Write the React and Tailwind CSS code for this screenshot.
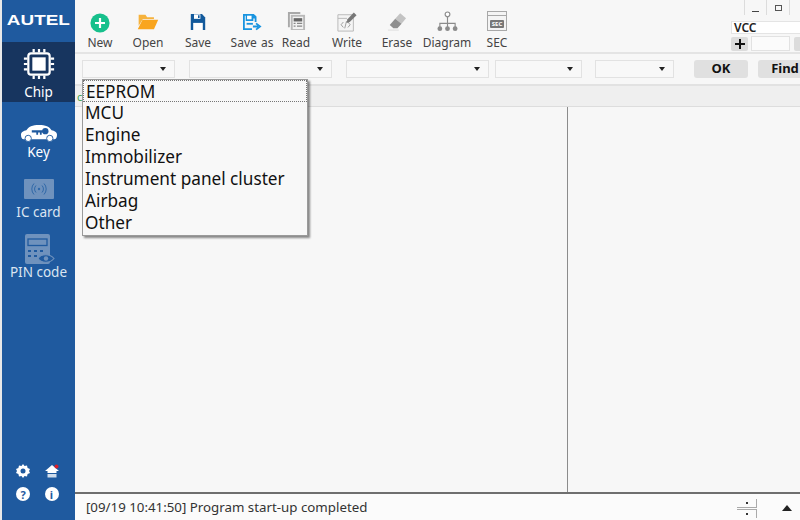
import React from "react";

const font = "font-['Noto_Sans','Open_Sans',sans-serif]";

const NewIcon = () => (
  <svg width="20" height="20" viewBox="0 0 22 22">
    <circle cx="11" cy="11" r="10.500" fill="#17c08c" />
    <path d="M11 5.500v11M5.500 11h11" stroke="#fff" strokeWidth="2.400" />
  </svg>
);

const OpenIcon = () => (
  <svg className="mb-[3px]" width="22" height="17" viewBox="0 0 24 20">
    <path d="M1 2h8l2 3h8v2H6L1 15z" fill="#f6b23c" />
    <path d="M5.500 8H24l-5 11H0z" fill="#f9a51e" />
  </svg>
);

const SaveIcon = () => (
  <svg className="mb-[2px]" width="16" height="18" viewBox="0 0 20 20" preserveAspectRatio="none">
    <path d="M1 1h14l4 4v14H1z" fill="#135a9c" />
    <path d="M5 1.500h8v5H5z" fill="#fff" />
    <path d="M10 2.500h2v3h-2z" fill="#135a9c" />
    <path d="M4 11h12v8H4z" fill="#fff" />
  </svg>
);

const SaveAsIcon = () => (
  <svg className="mb-[2px]" width="20" height="18" viewBox="0 0 22 20">
    <path d="M1 1h12l3 3v6h-2V6h-1.500v3H4V3H3v14h8v2H1z" fill="#1994e0" />
    <path d="M5.500 3h5v4h-5z" fill="#fff" />
    <path d="M12 15h6M15.500 11.500 20 15l-4.500 3.500" stroke="#1994e0" strokeWidth="2" fill="none" />
    <path d="M5 12h7" stroke="#1994e0" strokeWidth="2" />
  </svg>
);

const ReadIcon = () => (
  <svg className="mb-[2px]" width="19" height="20" viewBox="0 0 20 21">
    <path d="M1 1h13v2H3v14H1z" fill="#a9a9a9" />
    <path d="M4 4h15v16H4z" fill="#b9b9b9" />
    <path d="M6 6h11v13H6z" fill="#f2f2f2" />
    <path d="M7 7.500h9v3.500H7z" fill="#666" />
    <path d="M7 13h2M10.500 13H16M7 16h2M10.500 16H16" stroke="#888" strokeWidth="1.300" />
  </svg>
);

const WriteIcon = () => (
  <svg className="mb-[1px]" width="20" height="20" viewBox="0 0 22 22">
    <path d="M1 3h17v18H1z" fill="#f4f4f4" stroke="#b5b5b5" />
    <path d="M1 7h10" stroke="#b5b5b5" />
    <path d="M7 11l-2.500 3L7 17M12 11l2.500 3L12 17M10.500 10l-2 8" stroke="#999" strokeWidth="1" fill="none" />
    <path d="M18.500 0.500l3 3-7.500 7.500-3.500 1 1-4z" fill="#777" />
  </svg>
);

const EraseIcon = () => (
  <svg className="mb-[2px]" width="20" height="19" viewBox="0 0 22 21">
    <path d="M14.500 1.500 21 7l-5 6-7-5.500z" fill="#c3c3c3" />
    <path d="M9 7.500l7 5.500-4.500 5H7l-4-3.500z" fill="#8f8f8f" />
    <path d="M1 20h12" stroke="#ddd" strokeWidth="1" />
  </svg>
);

const DiagramIcon = () => (
  <svg className="mb-[1px]" width="21" height="21" viewBox="0 0 22 22">
    <circle cx="11" cy="3.500" r="2.500" fill="#fff" stroke="#8b8b8b" strokeWidth="1.200" />
    <path d="M11 6v12M3 18v-5h16v5" stroke="#8b8b8b" strokeWidth="1.200" fill="none" />
    <circle cx="3" cy="18.500" r="2.500" fill="#8b8b8b" />
    <circle cx="11" cy="18.500" r="2.500" fill="#8b8b8b" />
    <circle cx="19" cy="18.500" r="2.500" fill="#8b8b8b" />
  </svg>
);

const SecIcon = () => (
  <div className="mb-[2px] flex h-5 w-5 flex-col border border-[#a8a8a8] bg-[#f4f4f4]">
    <div className="h-1 border-b border-[#a8a8a8]" />
    <div className="m-[2px] mt-1 flex h-[9px] items-center justify-center rounded-[1px] bg-[#777] text-[6px] font-bold leading-none text-white">
      SEC
    </div>
  </div>
);

const tools = [
  { label: "New", width: "w-[48px]", icon: <NewIcon /> },
  { label: "Open", width: "w-[48px]", icon: <OpenIcon /> },
  { label: "Save", width: "w-[52px]", icon: <SaveIcon /> },
  { label: "Save as", width: "w-[56px]", icon: <SaveAsIcon /> },
  { label: "Read", width: "w-[32px]", icon: <ReadIcon /> },
  { label: "Write", width: "w-[70px]", icon: <WriteIcon /> },
  { label: "Erase", width: "w-[30px]", icon: <EraseIcon /> },
  { label: "Diagram", width: "w-[70px]", icon: <DiagramIcon /> },
  { label: "SEC", width: "w-[30px]", icon: <SecIcon /> },
];

const ToolButton = ({ label, width, icon }) => (
  <div className={`flex shrink-0 flex-col items-center ${width}`}>
    <div className="flex h-[22px] items-end">{icon}</div>
    <span className="mt-[1px] whitespace-nowrap text-xs leading-[17px] text-[#444] [word-spacing:1px]">{label}</span>
  </div>
);

const ChipIcon = () => (
  <svg className="mb-[2px]" width="32" height="32" viewBox="0 0 36 36">
    <rect x="6" y="6" width="24" height="24" rx="3" fill="none" stroke="#fff" strokeWidth="2.500" />
    <rect x="10.500" y="10.500" width="15" height="15" fill="#fff" />
    <path d="M12 1v4M18 1v4M24 1v4M12 31v4M18 31v4M24 31v4M1 12h4M1 18h4M1 24h4M31 12h4M31 18h4M31 24h4" stroke="#fff" strokeWidth="2.500" />
  </svg>
);

const KeyIcon = () => (
  <svg width="42" height="18" viewBox="0 0 42 20">
    <path d="M1 12c0-3 3-4.500 6-5 2-4 7-6 14-6s12 2 14 6c3 .5 6 2 6 5 0 3-1 5-3 5H4c-2 0-3-2-3-5z" fill="#fff" />
    <circle cx="9" cy="16" r="3.500" fill="#fff" stroke="#1f5a9f" strokeWidth="1" />
    <circle cx="33" cy="16" r="3.500" fill="#fff" stroke="#1f5a9f" strokeWidth="1" />
    <circle cx="28" cy="8" r="3.500" fill="#1f5a9f" />
    <path d="M13 7h14v2.500h-3v2.500h-2V9.500h-2v2.500h-2V9.500h-5z" fill="#1f5a9f" />
  </svg>
);

const CardIcon = () => (
  <svg className="mb-[3px]" width="30" height="20" viewBox="0 0 30 20">
    <rect width="30" height="20" rx="1" fill="#6f92bd" />
    <circle cx="15" cy="10" r="1.200" fill="#2f68a8" />
    <path d="M12 6.500a5 5 0 0 0 0 7M18 6.500a5 5 0 0 1 0 7M10 4.500a8 8 0 0 0 0 11M20 4.500a8 8 0 0 1 0 11" stroke="#2f68a8" fill="none" />
  </svg>
);

const PinIcon = () => (
  <svg className="mb-[-3px] ml-[3px]" width="30" height="31" viewBox="0 0 30 31">
    <rect width="25" height="30" rx="2" fill="#6f92bd" />
    <rect x="3" y="5" width="19" height="6.500" fill="none" stroke="#1f5a9f" strokeWidth="1.300" />
    <path d="M3 17h3M9 17h3M15 17h3M3 22h3M9 22h3" stroke="#1f5a9f" strokeWidth="2" />
    <path d="M13 24.500c3-5 12-5 16 0-4 5-13 5-16 0z" fill="#1f5a9f" stroke="#6f92bd" strokeWidth="1.200" />
    <circle cx="21" cy="24.500" r="2.200" fill="#6f92bd" />
  </svg>
);

const SideItem = ({ label, icon, active, muted }) => (
  <div className={`flex h-[60px] flex-col items-center justify-end ${active ? "bg-[#17355f]" : ""}`}>
    <div className="flex h-9 items-end">{icon}</div>
    <span className={`whitespace-nowrap text-[13.5px] leading-[20px] ${muted ? "text-[#dbe5f1]" : "text-white"}`}>{label}</span>
  </div>
);

const Select = ({ width }) => (
  <div className={`flex h-[18px] shrink-0 items-center justify-end border border-[#e2e2e2] bg-[#f8f8f8] pr-[8px] ${width}`}>
    <span className="h-0 w-0 border-x-[3px] border-t-[4px] border-x-transparent border-t-[#222]" />
  </div>
);

const menuItems = ["EEPROM", "MCU", "Engine", "Immobilizer", "Instrument panel cluster", "Airbag", "Other"];

const App = () => {
  return (
    <div className={`flex h-[520px] w-[800px] overflow-hidden bg-[#f7f7f7] ${font}`}>
      <div className="w-[2px] shrink-0 bg-[#e9e9e9]" />

      <aside className="flex w-[73px] shrink-0 flex-col bg-[#1f5a9f]">
        <div className="flex h-[42px] items-center justify-center pb-[3px]">
          <span className="scale-x-[1.35] font-['Liberation_Sans',sans-serif] text-[14px] font-bold leading-none text-white">AUTEL</span>
        </div>
        <SideItem label="Chip" active icon={<ChipIcon />} />
        <SideItem label="Key" icon={<KeyIcon />} />
        <SideItem label="IC card" muted icon={<CardIcon />} />
        <SideItem label="PIN code" muted icon={<PinIcon />} />

        <div className="mt-auto mb-[19px] grid grid-cols-2 gap-y-[9px] px-[14px]">
          <svg width="14" height="14" viewBox="0 0 14 14">
            <path d="M7 0l1.500 2 2.500-.6.600 2.500 2.400 1-1 2.100 1 2.100-2.400 1-.6 2.500-2.500-.6L7 14l-1.500-2-2.500.6-.6-2.500-2.400-1 1-2.100-1-2.100 2.400-1L3 1.400l2.500.6z" fill="#fff" />
            <circle cx="7" cy="7" r="2.500" fill="#1f5a9f" />
          </svg>
          <svg className="ml-[6px]" width="14" height="14" viewBox="0 0 14 14">
            <path d="M7 1 14 7H11.500V9H2.500V7H0z" fill="#fff" />
            <path d="M2.500 10h9v3.500h-9z" fill="#cfdceb" />
            <circle cx="11.500" cy="2.500" r="2" fill="#d8202a" />
          </svg>
          <span className="flex h-[14px] w-[14px] items-center justify-center rounded-full bg-white text-[11px] font-bold leading-none text-[#1f5a9f]">?</span>
          <span className="ml-[6px] flex h-[14px] w-[14px] items-center justify-center rounded-full bg-white text-[11px] font-bold leading-none text-[#1f5a9f]">i</span>
        </div>
      </aside>

      <main className="relative flex min-w-0 flex-1 flex-col">
        <div className="relative flex h-[54px] shrink-0 items-start border-b-2 border-[#e4e4e4] pt-[11px] pl-[1px]">
          {tools.map((t) => (
            <ToolButton key={t.label} {...t} />
          ))}

          <div className="absolute top-0 left-[656px] w-[80px]">
            <div className="flex h-[20px] pl-[13px]">
              <div className="flex h-[15px] w-[23px] items-center justify-center border-x border-[#dcdcdc]">
                <span className="mt-[7px] h-[1px] w-[7px] bg-[#444]" />
              </div>
              <div className="flex h-[15px] w-[23px] items-center justify-center border-r border-[#dcdcdc]">
                <span className="h-[6px] w-[7px] border border-[#555]" />
              </div>
            </div>
            <div className="mt-[1px] flex h-[13px] items-center border border-[#e4e4e4] bg-white pl-[2px] text-[12px] font-semibold leading-[11px] text-[#222]">VCC</div>
            <div className="mt-[2px] flex items-center">
              <span className="flex h-[14px] w-[17px] items-center justify-center rounded-[2px] bg-[#dcdcdc]">
                <svg width="10" height="10" viewBox="0 0 10 10">
                  <path d="M5 0v10M0 5h10" stroke="#111" strokeWidth="2" />
                </svg>
              </span>
              <span className="ml-[3px] h-[15px] w-[39px] border border-[#e2e2e2] bg-[#fbfbfb]" />
              <span className="ml-[4px] h-[14px] w-[17px] rounded-[2px] bg-[#dcdcdc]" />
            </div>
          </div>
        </div>

        <div className="flex h-[32px] shrink-0 items-center border-b-2 border-[#e2e2e2] pl-[7px]">
          <Select width="w-[93px]" />
          <Select width="ml-[14px] w-[143px]" />
          <Select width="ml-[14px] w-[143px]" />
          <Select width="ml-[6px] w-[87px]" />
          <Select width="ml-[13px] w-[79px]" />
          <span className="ml-[20px] flex h-[18px] w-[54px] shrink-0 items-center justify-center rounded-[3px] bg-[#e0e0e0] text-[13px] font-bold text-[#111]">OK</span>
          <span className="ml-[10px] flex h-[18px] w-[54px] shrink-0 items-center justify-center rounded-[3px] bg-[#e0e0e0] text-[13px] font-bold text-[#111]">Find</span>
        </div>

        <div className="flex h-[20px] shrink-0 items-center bg-[#efefef] pl-[2px]">
          <span className="text-[11px] leading-none text-[#3fa34d]">c</span>
        </div>

        <div className="flex min-h-0 flex-1 border-t border-[#dddddd]">
          <div className="w-[493px] shrink-0 border-r border-[#8c8c8c]" />
          <div className="flex-1" />
        </div>

        <div className="flex h-[28px] shrink-0 items-center border-t-2 border-[#6f6f6f] bg-[#fbfbfb] pt-[1px] pl-[11px] pr-[8px]">
          <span className="text-[13.3px] leading-none text-[#333]">[09/19 10:41:50] Program start-up completed</span>
          <div className="mt-[1px] ml-auto flex flex-col gap-[1px]">
            <div className="flex h-[9px] w-[20px] items-center justify-center border-r border-b border-[#aaa]">
              <span className="h-[2px] w-[2px] bg-[#333]" />
            </div>
            <div className="flex h-[9px] w-[20px] items-center justify-center border-r border-t border-[#aaa]">
              <span className="h-[2px] w-[2px] bg-[#333]" />
            </div>
          </div>
          <span className="ml-[25px] h-0 w-0 border-x-[5px] border-b-[6px] border-x-transparent border-b-[#222]" />
        </div>

        <div className="absolute top-[79px] left-[7px] w-[226px] border border-[#9a9a9a] bg-[#f8f8f8] pb-[1px] shadow-[2px_2px_2px_rgba(0,0,0,0.45)]">
          {menuItems.map((item, i) => (
            <div
              key={item}
              className={`h-[22px] whitespace-nowrap pl-[2px] text-[17.2px] leading-[21px] text-[#111] ${i === 0 ? "border border-dotted border-[#777] pl-[1px] leading-[15px]" : ""}`}
            >
              {item}
            </div>
          ))}
        </div>
      </main>
    </div>
  );
};

export default App;
